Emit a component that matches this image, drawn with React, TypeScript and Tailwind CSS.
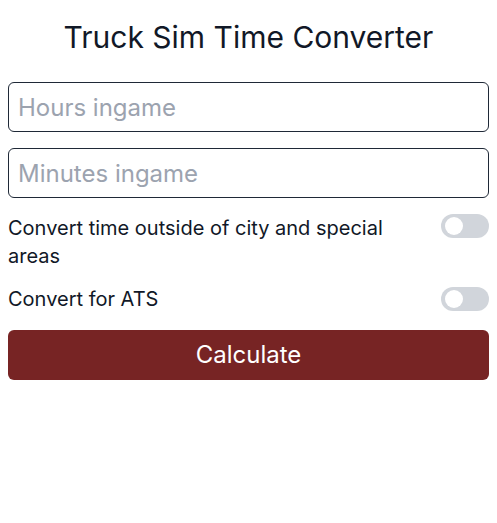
import React, { useState } from "react";

function Toggle({ on, onChange }: { on: boolean; onChange: () => void }) {
  return (
    <button
      type="button"
      onClick={onChange}
      className={`relative shrink-0 w-12 h-6 rounded-full ${on ? "bg-[#772424]" : "bg-[#d1d5db]"}`}
    >
      <span
        className={`absolute top-[3px] w-[18px] h-[18px] rounded-full bg-white ${on ? "left-[26px]" : "left-[4px]"}`}
      />
    </button>
  );
}

export default function App() {
  const [a, setA] = useState(false);
  const [b, setB] = useState(false);
  return (
    <div className="w-[497px] bg-white px-2 pt-[19px] text-[#111827] font-['Inter','Noto_Sans',sans-serif]">
      <h1 className="text-center text-3xl leading-9 font-normal mb-[27px]">Truck Sim Time Converter</h1>
      <input
        className="block w-full h-[50px] border border-[#1f2937] rounded-md px-[9px] text-2xl placeholder:text-[#9ca3af] outline-none"
        placeholder="Hours ingame"
      />
      <input
        className="block w-full h-[50px] border border-[#1f2937] rounded-md px-[9px] text-2xl placeholder:text-[#9ca3af] outline-none mt-[16px]"
        placeholder="Minutes ingame"
      />
      <div className="flex items-start justify-between gap-4 mt-[16px]">
        <span className="text-xl leading-7">Convert time outside of city and special areas</span>
        <Toggle on={a} onChange={() => setA(!a)} />
      </div>
      <div className="flex items-center justify-between mt-[15px]">
        <span className="text-xl leading-7">Convert for ATS</span>
        <Toggle on={b} onChange={() => setB(!b)} />
      </div>
      <button
        type="button"
        className="block w-full h-[50px] mt-[17px] rounded-md bg-[#772424] text-white text-2xl"
      >
        Calculate
      </button>
    </div>
  );
}
